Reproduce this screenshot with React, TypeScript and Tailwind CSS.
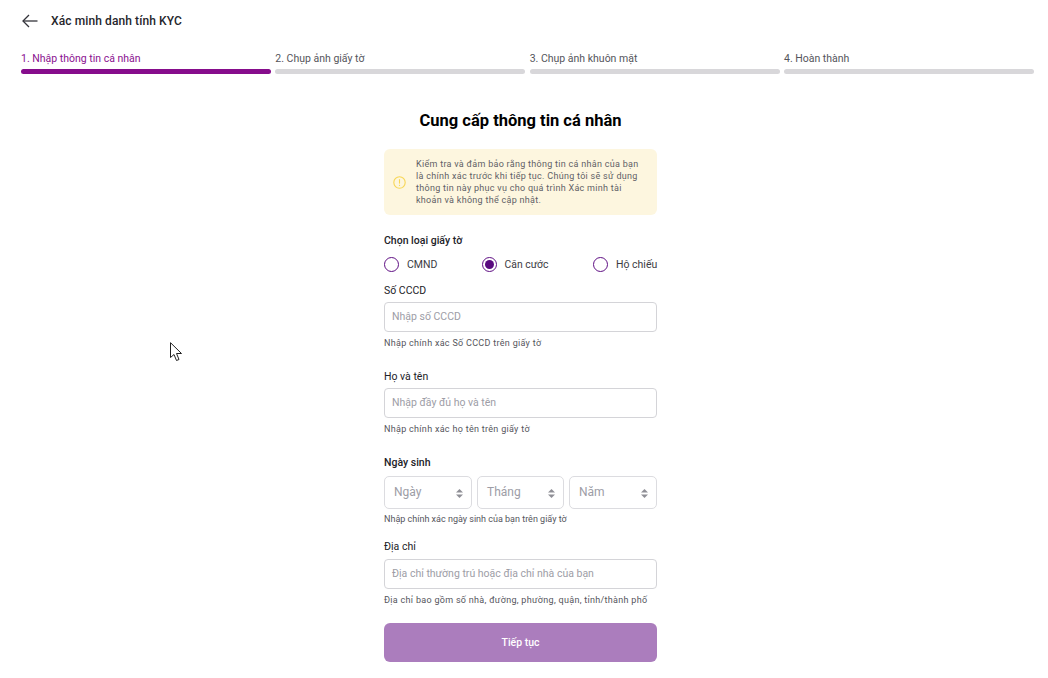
import React from "react";

function Step({ label, active }: { label: string; active?: boolean }) {
  return (
    <div className="flex-1 min-w-0">
      <div className={active ? "h-[16px] pt-[1px] text-[10.5px] leading-[16px] text-[#8a0f8f]" : "h-[16px] pt-[1px] text-[10.5px] leading-[16px] text-[#55555c]"}>{label}</div>
      <div className={active ? "mt-[3px] h-[5px] rounded-full bg-[#860d8c]" : "mt-[3px] h-[5px] rounded-full bg-[#d8d7da]"} />
    </div>
  );
}

function Radio({ label, checked, className }: { label: string; checked?: boolean; className: string }) {
  return (
    <div className={"flex items-center " + className}>
      <span className="flex h-[15px] w-[15px] shrink-0 items-center justify-center rounded-full border border-[#5f0f84] bg-white">
        {checked && <span className="h-[9px] w-[9px] rounded-full bg-[#5a0a80]" />}
      </span>
      <span className={checked ? "ml-[7.5px] h-[16px] whitespace-nowrap pt-[1px] text-[10.4px] leading-[16px] text-[#3c3c43]" : "ml-[8px] h-[16px] whitespace-nowrap pt-[1px] text-[10.5px] leading-[16px] text-[#3c3c43]"}>{label}</span>
    </div>
  );
}

function Field({ label, placeholder, hint, lowered }: { label: string; placeholder: string; hint: string; lowered?: boolean }) {
  return (
    <div>
      <div className={lowered ? "h-[16px] pt-[1px] text-[10.5px] leading-[16px] text-[#222228]" : "h-[16px] text-[10.5px] leading-[16px] text-[#222228]"}>{label}</div>
      <div className="mt-[4px] flex h-[30px] items-center rounded-[4px] border border-[#d4d4d8] pl-[7px] text-[10.5px] text-[#9d9da6]">{placeholder}</div>
      <div className="mt-[4px] h-[14px] text-[9px] leading-[14px] tracking-[0.3px] text-[#55555c]">{hint}</div>
    </div>
  );
}

function SelectBox({ label, className }: { label: string; className: string }) {
  return (
    <div className={"relative flex h-[33px] items-center rounded-[5px] border border-[#dcdce0] pl-[9px] text-[12px] text-[#9d9da6] " + className}>
      <span className="-mt-[2px]">{label}</span>
      <svg className="absolute right-[8px] top-[12px]" width="7" height="9" viewBox="0 0 7 9" fill="#8f8f96">
        <path d="M3.5 0 L7 3.6 H0 Z" />
        <path d="M3.5 9 L7 5.4 H0 Z" />
      </svg>
    </div>
  );
}

export default function App() {
  return (
    <div className="relative h-[678px] w-[1048px] overflow-hidden bg-white font-['Roboto',sans-serif]">
      <header className="flex h-[41px] items-center pl-[22px]">
        <svg width="16" height="14" viewBox="0 0 16 14" fill="none" stroke="#33333a" strokeWidth="1.3">
          <path d="M15.5 7 H1" />
          <path d="M7 1 L1 7 L7 13" />
        </svg>
        <span className="ml-[13px] text-[12px] font-medium tracking-[0.1px] text-[#26262c]">Xác minh danh tính KYC</span>
      </header>

      <div className="mt-[9px] flex gap-[4.3px] pl-[21px] pr-[14px]">
        <Step label="1. Nhập thông tin cá nhân" active />
        <Step label="2. Chụp ảnh giấy tờ" />
        <Step label="3. Chụp ảnh khuôn mặt" />
        <Step label="4. Hoàn thành" />
      </div>

      <main className="ml-[384px] w-[273px]">
        <h1 className="mt-[35px] h-[24px] text-center text-[16.5px] font-bold leading-[24px] text-black">Cung cấp thông tin cá nhân</h1>

        <div className="mt-[16px] flex h-[66px] items-center rounded-[6px] bg-[#fdf6df] pl-[9px]">
          <svg className="shrink-0" width="13" height="13" viewBox="0 0 13 13" fill="none" stroke="#f7d655" strokeWidth="1.1">
            <circle cx="6.5" cy="6.5" r="5.7" />
            <path d="M6.5 3.2 V7.6" />
            <path d="M6.5 8.8 V9.9" />
          </svg>
          <p className="ml-[10px] w-[228px] text-[9px] leading-[12px] tracking-[0.29px] text-[#5f5f66]">
            Kiểm tra và đảm bảo rằng thông tin cá nhân của bạn là chính xác trước khi tiếp tục. Chúng tôi sẽ sử dụng thông tin này phục vụ cho quá trình Xác minh tài khoản và không thể cập nhật.
          </p>
        </div>

        <div className="mt-[18px] h-[16px] text-[10.5px] font-medium leading-[16px] text-[#222228]">Chọn loại giấy tờ</div>
        <div className="mt-[7px] flex h-[16px]">
          <Radio label="CMND" className="w-[98px]" />
          <Radio label="Căn cước" checked className="w-[111px]" />
          <Radio label="Hộ chiếu" className="w-[64px]" />
        </div>

        <div className="mt-[10px]">
          <Field label="Số CCCD" placeholder="Nhập số CCCD" hint="Nhập chính xác Số CCCD trên giấy tờ" lowered />
        </div>
        <div className="mt-[18px]">
          <Field label="Họ và tên" placeholder="Nhập đầy đủ họ và tên" hint="Nhập chính xác họ tên trên giấy tờ" lowered />
        </div>

        <div className="mt-[19px] h-[16px] text-[10.5px] font-medium leading-[16px] text-[#222228]">Ngày sinh</div>
        <div className="mt-[5px] flex gap-[5px]">
          <SelectBox label="Ngày" className="w-[88px]" />
          <SelectBox label="Tháng" className="w-[87px]" />
          <SelectBox label="Năm" className="w-[88px]" />
        </div>
        <div className="mt-[3px] h-[14px] text-[9px] leading-[14px] text-[#55555c]">Nhập chính xác ngày sinh của bạn trên giấy tờ</div>

        <div className="mt-[13px]">
          <Field label="Địa chỉ" placeholder="Địa chỉ thường trú hoặc địa chỉ nhà của bạn" hint="Địa chỉ bao gồm số nhà, đường, phường, quận, tỉnh/thành phố" />
        </div>

        <button className="mt-[16px] flex h-[39px] w-full items-center justify-center rounded-[6px] bg-[#ab7dbd] text-[10.5px] font-medium text-white">Tiếp tục</button>
      </main>

      <svg className="absolute left-[170px] top-[342px]" width="13" height="20" viewBox="0 0 13 20" fill="#fff" stroke="#222" strokeWidth="1">
        <path d="M0.5 0.7 V15.5 L4 12.5 L6.5 18.5 L9 17.5 L6.5 11.5 H11.5 Z" />
      </svg>
    </div>
  );
}
